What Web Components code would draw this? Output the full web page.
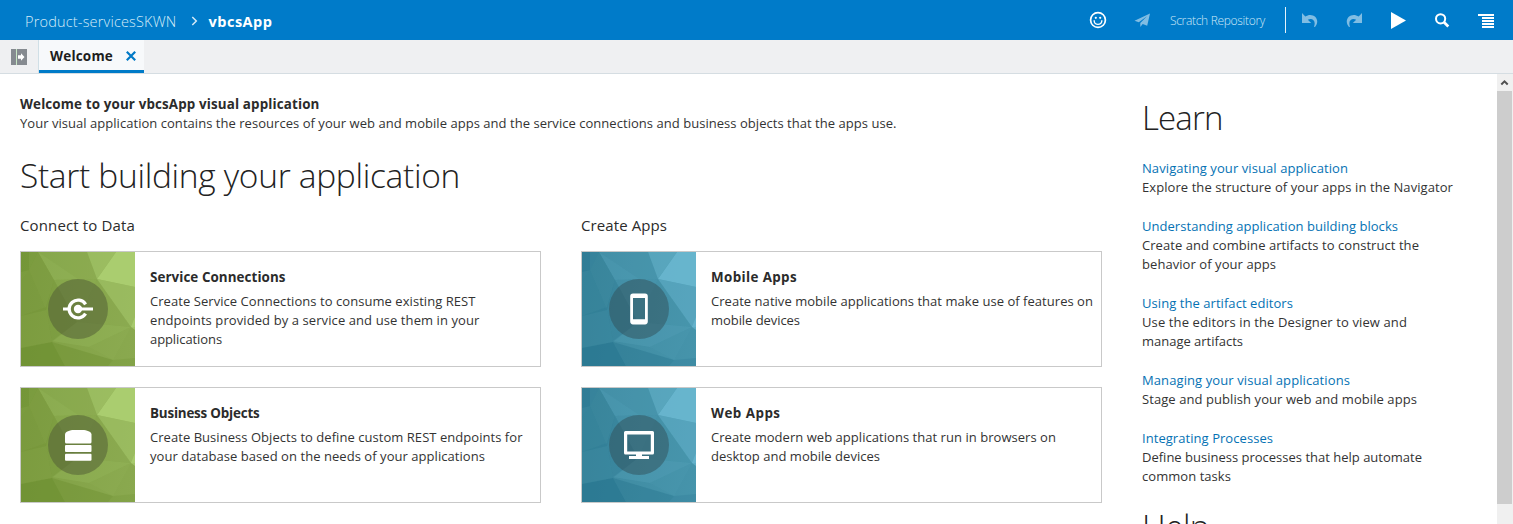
<!DOCTYPE html>
<html lang="en">
<head>
<meta charset="utf-8">
<title>vbcsApp</title>
<style>
  html, body { margin: 0; height: 100%; overflow: hidden; background: #fff; }
  body { font: 13px/19px "Open Sans", "Noto Sans", sans-serif; color: #333; }
</style>
</head>
<body>
<vb-app></vb-app>
<script>
const define = (name, html, setup) => {
  const tpl = document.createElement('template');
  tpl.innerHTML = html;
  customElements.define(name, class extends HTMLElement {
    connectedCallback() {
      if (this.shadowRoot) return;
      this.attachShadow({ mode: 'open' }).append(tpl.content.cloneNode(true));
      if (setup) setup(this, this.shadowRoot);
    }
  });
};

/* A single line of text, tracked so that it fills the width in "w". */
define('vb-line', `<style>:host{display:block;white-space:nowrap}span{display:inline-block}</style><span><slot></slot></span>`,
  (el, root) => {
    const want = +el.getAttribute('w');
    if (!want) return;
    const span = root.querySelector('span');
    span.style.letterSpacing = ((want - span.getBoundingClientRect().width) / el.textContent.length) + 'px';
  });

const icons = {
  smile: `<g fill="none" stroke="#fff" stroke-width="1.700"><circle cx="10" cy="10" r="7.400"/><path d="M6.200 10.300v.8a3.800 3.300 0 0 0 7.600 0v-.8" stroke-width="1.400"/></g><circle cx="7.800" cy="7.800" r="1.100" fill="#fff"/><circle cx="12.200" cy="7.800" r="1.100" fill="#fff"/>`,
  plane: `<path fill="#80bde3" d="M18 3.500 2.500 10.800 6.800 12.300 15 6.200 8.300 12.900V17L10.700 13.900 15.200 15.800z"/>`,
  undo: `<path fill="#80bde3" d="M2 3v10h9.200L7.800 9.800C11.500 7.500 16.500 10 14 16.800l1 .2C21.500 9 12.500 1.500 5.300 6.500z"/>`,
  redo: `<path fill="#80bde3" d="M18 3v10H8.800l3.400-3.200C8.500 7.500 3.500 10 6 16.800L5 17C-1.500 9 7.500 1.500 14.700 6.500z"/>`,
  play: `<path fill="#fff" d="M3 2 18 10.500 3 19z"/>`,
  search: `<g fill="none" stroke="#fff"><circle cx="8.600" cy="8.800" r="4.600" stroke-width="2"/><path d="m12 12.300 4.300 4.200" stroke-width="2.800"/></g>`,
  menu: `<path fill="#fff" d="M2 3h16v2H2zM6 6h12v2H6zM6 9h12v2H6zM6 12h12v2H6zM6 15h12v2H6z" transform="translate(0 1)" shape-rendering="crispEdges"/>`,
  connection: `<path d="M27.600 15.300a8.900 8.900 0 1 0 0 9.400" fill="none" stroke="#fff" stroke-width="3.300"/><circle cx="20" cy="20" r="4.200" fill="#fff"/><path fill="#fff" d="M5 18.500h7v3H5zM20 18.500h15v3H20z"/>`,
  database: `<path fill="#fff" d="M7 17V9.500C7 6.500 12 5 16 5h8.500c4 0 9 1.500 9 4.500V17q0 1.500-1.500 1.500H8.500Q7 18.500 7 17z"/><rect x="7" y="20" width="26.500" height="7" rx="1" fill="#fff"/><rect x="7" y="28.800" width="26.500" height="7" rx="1" fill="#fff"/>`,
  phone: `<path fill="#fff" fill-rule="evenodd" d="M14 4.600h12a2.800 2.800 0 0 1 2.800 2.800v25.200a2.800 2.800 0 0 1-2.800 2.800H14a2.800 2.800 0 0 1-2.800-2.800V7.400A2.800 2.800 0 0 1 14 4.600zM14 9v21.300h12V9z"/>`,
  monitor: `<path fill="#fff" fill-rule="evenodd" d="M6.500 6h27q1.500 0 1.500 1.500V28q0 1.500-1.500 1.500H23V31h7v3H10v-3h7v-1.500H6.500Q5 29.500 5 28V7.500Q5 6 6.500 6zM8.200 9.400v17.100h23.600V9.400z"/>`
};
define('vb-icon', `<style>:host{display:block;flex:none;width:20px;height:20px}svg{display:block;width:100%;height:100%}</style><svg></svg>`,
  (el, root) => {
    const svg = root.querySelector('svg');
    svg.setAttribute('viewBox', `0 0 ${el.getAttribute('box') || 20} ${el.getAttribute('box') || 20}`);
    svg.innerHTML = icons[el.getAttribute('name')] || '';
  });

define('vb-topbar', `<style>
  :host{display:flex;align-items:center;height:40px;background:#007bc9;color:#fff;box-sizing:border-box;padding:3px 16px 0 25px}
  .project{font-size:14.500px;font-weight:300;color:#d6ebf8}
  .chev{width:7px;height:10px;margin:0 11px 1px 14px}
  .name{font-size:14.500px;font-weight:700}
  .tools{margin-left:auto;display:flex;align-items:center;height:40px;margin-top:-3px}
  .repo{font-size:12px;font-weight:300;color:#cfe8f7;margin:0 20px 0 18px}
  .sep{width:1px;height:26px;background:#e5f2fa;margin-right:14px}
  .g{margin-left:24px}
</style>
<vb-line class="project" w="151.500">Product-servicesSKWN</vb-line>
<svg class="chev" viewBox="0 0 7 10"><path d="m1.300 1 4 4-4 4" fill="none" stroke="#d5eaf7" stroke-width="1.500"/></svg>
<vb-line class="name" w="64">vbcsApp</vb-line>
<div class="tools"><vb-icon name="smile"></vb-icon><vb-icon name="plane" class="g"></vb-icon>
<vb-line class="repo" w="95">Scratch Repository</vb-line><div class="sep"></div>
<vb-icon name="undo"></vb-icon><vb-icon name="redo" class="g"></vb-icon><vb-icon name="play" class="g"></vb-icon><vb-icon name="search" class="g"></vb-icon><vb-icon name="menu" class="g" style="margin-right:1px"></vb-icon></div>`);

define('vb-tabbar', `<style>
  :host{display:flex;height:34px;box-sizing:border-box;background:#eff0f2;border-bottom:1px solid #d5dde2}
  .toggle{border-right:1px solid #d0dfe6;display:flex;align-items:center;padding-left:11px;width:27px}
  .tab{display:flex;align-items:center;width:105px;box-sizing:border-box;padding:3px 0 0 11px;background:#f7f9fb;border-bottom:3px solid #007bc8}
  .label{font-weight:700;font-size:13.500px;color:#1d1d1d}
  .tab svg{margin:0 0 1px 13px}
</style>
<div class="toggle"><svg width="16" height="16" viewBox="0 0 16 16"><path fill="#858a90" d="M0 0h5v16H0zM6 0h10v16H6z"/><path stroke="#c7e6c5" d="M5.500 0v16"/><path fill="#fff" d="M7 6.200h3V4.300L13.500 8 10 11.700V9.800H7z"/></svg></div>
<div class="tab"><vb-line class="label" w="63">Welcome</vb-line><svg width="10" height="10" viewBox="0 0 10 10"><path d="m.8.8 8.400 8.400m0-8.400L.8 9.200" stroke="#0079c6" stroke-width="2.200"/></svg></div>`);

const facets = `
  <g class="lit">
  <path fill-opacity=".5" d="M66 0 76 27 95 0z"/>
  <path fill-opacity=".85" d="M95 0H114V35L76 27z"/>
  <path fill-opacity=".45" d="M76 27 114 35V75L110 75z"/>
  <path fill-opacity=".6" d="m110 75 4-10v13z"/>
  <path fill-opacity=".14" d="M17 0H66L76 27 33 28z"/>
  <path fill-opacity=".1" d="M17 0 57 27 33 28z"/>
  <path fill-opacity=".1" d="M33 28 76 27 56 70z"/>
  <path fill-opacity=".06" d="M76 27 110 75 56 70z"/>
  <path fill-opacity=".16" d="m31 89 25-19 54 5-42 20z"/>
  <path fill-opacity=".05" d="m68 95 42-20-18 33z"/>
  </g>
  <g class="dim">
  <path fill-opacity=".2" d="M0 0H17L8 18 0 29z"/>
  <path fill-opacity=".3" d="M0 0H8V18L0 20z"/>
  <path fill-opacity=".14" d="M17 0 33 28 25 58 8 18z"/>
  <path fill-opacity=".24" d="M0 29 8 18 25 58 0 64z"/>
  <path fill-opacity=".2" d="M33 28 56 70 31 90 25 55z"/>
  <path fill-opacity=".16" d="M0 64 25 55 31 90 0 96z"/>
  <path fill-opacity=".6" d="M0 96 31 90 44 114H0z"/>
  <path fill-opacity=".35" d="m31 90 61 18-5 6H44z"/>
  <path fill-opacity=".2" d="M92 108 114 106V114H87z"/>
  </g>`;
define('vb-card', `<style>
  :host{display:flex;height:116px;box-sizing:border-box;border:1px solid #c9c9c9;background:#fff;
    --base:linear-gradient(100deg,#7f9f43,#8aa94f);--lit:#b0d376;--dim:#688a2c;--dot:rgba(80,92,54,.52)}
  :host([tone="blue"]){--base:linear-gradient(100deg,#3c889e,#4694ab);--lit:#6dbbd4;--dim:#22708a;--dot:rgba(50,82,92,.52)}
  .art{display:grid;flex:none;width:114px;height:114px;place-items:center;background:var(--base)}
  .art>*{grid-area:1/1}
  .art svg{display:block}
  .lit{fill:var(--lit)}
  .dim{fill:var(--dim)}
  .dot{width:60px;height:60px;border-radius:50%;background:var(--dot);display:grid;place-items:center}
  vb-icon{width:40px;height:40px}
  .text{padding:16px 0 0 15px}
</style>
<div class="art"><svg width="114" height="114" viewBox="0 0 114 114">${facets}</svg><div class="dot"></div></div>
<div class="text"><slot name="title"></slot><slot></slot></div>`,
  (el, root) => {
    const icon = document.createElement('vb-icon');
    icon.setAttribute('box', '40');
    icon.setAttribute('name', el.getAttribute('icon'));
    root.querySelector('.dot').append(icon);
  });

define('vb-link', `<style>:host{display:block;margin-bottom:20px}.a{color:#0572b4}</style><div class="a"><slot name="link"></slot></div><slot></slot>`);

define('vb-learn', `<style>
  :host{display:block;padding-top:20px;width:355px}
  .h{font-size:33px;line-height:48px;font-weight:320;color:#222;margin-bottom:17px}
  .help{margin-top:-3px}
</style>
<vb-line class="h" w="80.500">Learn</vb-line>
<vb-link><vb-line slot="link" w="206">Navigating your visual application</vb-line><vb-line w="311">Explore the structure of your apps in the Navigator</vb-line></vb-link>
<vb-link><vb-line slot="link" w="256">Understanding application building blocks</vb-line><vb-line w="277">Create and combine artifacts to construct the</vb-line><vb-line w="134">behavior of your apps</vb-line></vb-link>
<vb-link><vb-line slot="link" w="151">Using the artifact editors</vb-line><vb-line w="265">Use the editors in the Designer to view and</vb-line><vb-line w="101">manage artifacts</vb-line></vb-link>
<vb-link><vb-line slot="link" w="208">Managing your visual applications</vb-line><vb-line w="275">Stage and publish your web and mobile apps</vb-line></vb-link>
<vb-link><vb-line slot="link" w="131">Integrating Processes</vb-line><vb-line w="280">Define business processes that help automate</vb-line><vb-line w="89">common tasks</vb-line></vb-link>
<vb-line class="h help" w="67">Help</vb-line>`);

define('vb-welcome', `<style>
  :host{display:block;width:1082px;padding:21px 0 0 20px}
  .b{font-weight:700;font-size:13.400px;color:#2b2b2b}
  .h{font-size:33.500px;line-height:48px;font-weight:320;color:#222;margin:18px 0 16px}
  .cols{display:grid;grid-template-columns:521px 521px;column-gap:40px;row-gap:20px}
  .sub{font-size:15px;line-height:20px;color:#2b2b2b;margin-bottom:-4px}
  .t{font-weight:700;font-size:13.400px;margin-bottom:5px;color:#2b2b2b}
</style>
<vb-line class="b" w="299.500">Welcome to your vbcsApp visual application</vb-line>
<vb-line w="876.500">Your visual application contains the resources of your web and mobile apps and the service connections and business objects that the apps use.</vb-line>
<vb-line class="h" w="440">Start building your application</vb-line>
<div class="cols">
<vb-line class="sub" w="115">Connect to Data</vb-line><vb-line class="sub" w="86">Create Apps</vb-line>
<vb-card tone="green" icon="connection"><vb-line class="t" slot="title" w="135.500">Service Connections</vb-line><vb-line w="325.500">Create Service Connections to consume existing REST</vb-line><vb-line w="329.500">endpoints provided by a service and use them in your</vb-line><vb-line w="72">applications</vb-line></vb-card>
<vb-card tone="blue" icon="phone"><vb-line class="t" slot="title" w="86">Mobile Apps</vb-line><vb-line w="382">Create native mobile applications that make use of features on</vb-line><vb-line w="89">mobile devices</vb-line></vb-card>
<vb-card tone="green" icon="database"><vb-line class="t" slot="title" w="109.500">Business Objects</vb-line><vb-line w="372.500">Create Business Objects to define custom REST endpoints for</vb-line><vb-line w="335">your database based on the needs of your applications</vb-line></vb-card>
<vb-card tone="blue" icon="monitor"><vb-line class="t" slot="title" w="69.500">Web Apps</vb-line><vb-line w="345">Create modern web applications that run in browsers on</vb-line><vb-line w="169">desktop and mobile devices</vb-line></vb-card>
</div>`);

define('vb-scrollbar', `<style>
  :host{display:flex;flex-direction:column;width:16px;background:#f0f0f0}
  svg{display:block;flex:none;height:17px}
  .thumb{height:413px;width:15px;background:#cdcdcd}
</style><svg width="16" height="17" viewBox="0 0 16 17"><path d="m4.300 10.500 3.200-3.200 3.200 3.200" fill="none" stroke="#505050" stroke-width="2"/></svg><div class="thumb"></div>`);

define('vb-app', `<style>
  :host{display:flex;flex-direction:column;height:100vh;overflow:hidden}
  vb-topbar,vb-tabbar{flex:none}
  .main{display:flex;flex:1;min-height:0;overflow:hidden}
  vb-welcome{flex:none}
  vb-learn{margin-left:40px;flex:none}
</style><vb-topbar></vb-topbar><vb-tabbar></vb-tabbar><div class="main"><vb-welcome></vb-welcome><vb-learn></vb-learn><vb-scrollbar></vb-scrollbar></div>`);
</script>
</body>
</html>
